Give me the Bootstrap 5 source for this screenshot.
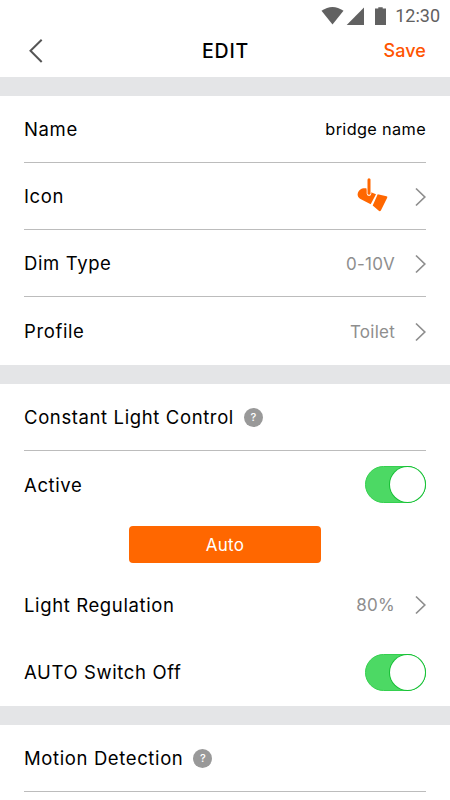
<!DOCTYPE html>
<html lang="en">
<head>
<meta charset="utf-8">
<meta name="viewport" content="width=device-width, initial-scale=1">
<title>Edit</title>
<link href="https://cdn.jsdelivr.net/npm/bootstrap@5.3.0/dist/css/bootstrap.min.css" rel="stylesheet">
<style>
body{font-family:Inter,"Liberation Sans",sans-serif;color:#000;background:#fff;font-size:18.5px;letter-spacing:.62px;line-height:1.2;overflow:hidden;height:800px}
svg{display:block;flex:none}
.status{height:31px;padding-right:10px;color:#616161}
.clock{font-family:Roboto,sans-serif;font-size:18px;letter-spacing:0}
.topbar{height:46px;padding:0 24px 6px}
.topbar>*{flex:1 1 0}
.title{font-size:19.5px;font-weight:500;letter-spacing:.8px;padding:2px 0 0 1px}
.save{color:#ff5400;font-weight:500;font-size:18px;letter-spacing:.1px}
.band{height:19px;background:#e4e5e7}
.item{height:67px;margin:0 24px;padding-top:1px}
.tall{height:68px}
.line{border-bottom:1px solid #bcbcbc}
.value{color:#8e8e8e;font-size:17px;letter-spacing:.25px;padding-top:1px}
.own{font-size:16.3px;letter-spacing:.35px}
.arrow{margin-left:20px}
.help{width:19px;height:19px;background:#999;color:#fff;font-size:11px;font-weight:500;letter-spacing:0;margin-left:10px}
.switch{width:61px;height:37px;border-radius:19px;background:#4cd964;border:1px solid #35d04f;margin-bottom:1px}
.knob{width:35px;height:35px;border-radius:50%;background:#fff;box-shadow:0 0 0 1px #16c035}
.auto{width:192px;height:37px;margin-top:8px;margin-bottom:8px;padding-top:2px;background:#ff6700;color:#fff;border-radius:4px;font-size:17px;letter-spacing:.3px}
</style>
</head>
<body>
<div class="status d-flex align-items-center justify-content-end">
<svg width="74" height="20" viewBox="-3 0 74 20" fill="#616161"><path d="M-2.5 4.8Q8.5 -2.8 19.5 4.8L8.5 18.5Z"/><path d="M40 1.5V19H22.7Z"/><path d="M51 2.5H54.3V1.2H58.7V2.5H62V19H51Z"/></svg>
<span class="clock">12:30</span>
</div>
<header class="topbar d-flex align-items-center">
<div><svg width="24" height="26" viewBox="0 0 24 26" fill="none" stroke="#555" stroke-width="2"><path d="M17.7 1.7L6.5 12.8L17.7 24"/></svg></div>
<div class="title text-center">EDIT</div>
<div class="save text-end">Save</div>
</header>
<div class="band"></div>
<main>
<section>
<div class="item line d-flex align-items-center justify-content-between"><span>Name</span><span class="own">bridge name</span></div>
<div class="item line d-flex align-items-center"><span class="me-auto">Icon</span>
<svg width="33" height="37" viewBox="0 0 33 37"><path fill="#ff6700" d="M9.5 10.3H6.5C3 11 .6 13.5 .6 17Q.8 19.5 3 20.8L13.7 26.3L19 16.3L14 14.2L11 15.5Z"/><path fill="#ff6700" d="M20.7 16.3L29.5 18.2Q30.8 18.6 30.2 19.8L24 32.3Q23 33.9 21.5 32.5L15.7 27.5Z"/><path d="M12 1.7V15.6" stroke="#fff" stroke-width="4.6" stroke-linecap="round"/><path d="M12 1.7V15.2" stroke="#ff6700" stroke-width="3" stroke-linecap="round"/></svg>
<svg class="arrow" width="16" height="20" viewBox="0 0 16 20" fill="none" stroke="#8e8e8e" stroke-width="1.7"><path d="M6 1.5L14.8 10L6 18.5"/></svg></div>
<div class="item line d-flex align-items-center"><span class="me-auto">Dim Type</span><span class="value">0-10V</span>
<svg class="arrow" width="11" height="20" viewBox="0 0 11 20" fill="none" stroke="#8e8e8e" stroke-width="1.7"><path d="M1 1.5L9.8 10L1 18.5"/></svg></div>
<div class="item tall d-flex align-items-center"><span class="me-auto">Profile</span><span class="value">Toilet</span>
<svg class="arrow" width="11" height="20" viewBox="0 0 11 20" fill="none" stroke="#8e8e8e" stroke-width="1.7"><path d="M1 1.5L9.8 10L1 18.5"/></svg></div>
</section>
<div class="band"></div>
<section>
<div class="item line d-flex align-items-center"><span>Constant Light Control</span><span class="help rounded-circle d-flex align-items-center justify-content-center">?</span></div>
<div class="item d-flex align-items-center justify-content-between"><span>Active</span><span class="switch d-flex justify-content-end"><span class="knob"></span></span></div>
<button class="auto btn border-0 d-flex align-items-center justify-content-center mx-auto px-0 pb-0">Auto</button>
<div class="item d-flex align-items-center"><span class="me-auto">Light Regulation</span><span class="value">80%</span>
<svg class="arrow" width="11" height="20" viewBox="0 0 11 20" fill="none" stroke="#8e8e8e" stroke-width="1.7"><path d="M1 1.5L9.8 10L1 18.5"/></svg></div>
<div class="item tall d-flex align-items-center justify-content-between"><span>AUTO Switch Off</span><span class="switch d-flex justify-content-end"><span class="knob"></span></span></div>
</section>
<div class="band"></div>
<section>
<div class="item line d-flex align-items-center"><span>Motion Detection</span><span class="help rounded-circle d-flex align-items-center justify-content-center">?</span></div>
</section>
</main>
<script src="https://cdn.jsdelivr.net/npm/bootstrap@5.3.0/dist/js/bootstrap.bundle.min.js"></script>
</body>
</html>
